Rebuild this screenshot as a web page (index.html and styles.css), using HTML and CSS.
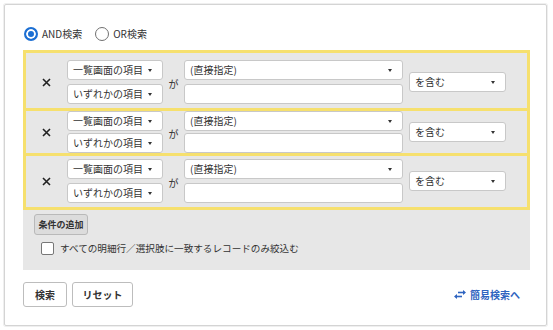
FILE: index.html
```html
<!DOCTYPE html>
<html lang="ja">
<head>
    <meta charset="UTF-8">
    <meta name="viewport" content="width=device-width, initial-scale=1.0">
    <title>詳細検索</title>
    <link rel="stylesheet" href="styles.css">
</head>
<body>

<div class="search-panel">
    <!-- AND / OR -->
    <div class="mode">
        <label class="radio checked"><span class="radio-mark"></span>AND検索</label>
        <label class="radio"><span class="radio-mark"></span>OR検索</label>
    </div>

    <div class="conditions">
        <div class="cond-row first">
            <div class="cond-del">
                <svg width="9" height="9" viewBox="0 0 9 9"><path d="M1 1L8 8M8 1L1 8" stroke="#222" stroke-width="1.6"/></svg>
            </div>
            <div class="cond-fields">
                <div class="select">一覧画面の項目</div>
                <div class="select">いずれかの項目</div>
            </div>
            <div class="cond-ga">が</div>
            <div class="cond-fields wide">
                <div class="select">(直接指定)</div>
                <div class="input"></div>
            </div>
            <div class="cond-op"><div class="select">を含む</div></div>
        </div>

        <div class="cond-row second">
            <div class="cond-del">
                <svg width="9" height="9" viewBox="0 0 9 9"><path d="M1 1L8 8M8 1L1 8" stroke="#222" stroke-width="1.6"/></svg>
            </div>
            <div class="cond-fields">
                <div class="select">一覧画面の項目</div>
                <div class="select">いずれかの項目</div>
            </div>
            <div class="cond-ga">が</div>
            <div class="cond-fields wide">
                <div class="select">(直接指定)</div>
                <div class="input"></div>
            </div>
            <div class="cond-op"><div class="select">を含む</div></div>
        </div>

        <div class="cond-row third">
            <div class="cond-del">
                <svg width="9" height="9" viewBox="0 0 9 9"><path d="M1 1L8 8M8 1L1 8" stroke="#222" stroke-width="1.6"/></svg>
            </div>
            <div class="cond-fields">
                <div class="select">一覧画面の項目</div>
                <div class="select">いずれかの項目</div>
            </div>
            <div class="cond-ga">が</div>
            <div class="cond-fields wide">
                <div class="select">(直接指定)</div>
                <div class="input"></div>
            </div>
            <div class="cond-op"><div class="select">を含む</div></div>
        </div>

        <button class="btn-add">条件の追加</button>

        <label class="check"><span class="check-box"></span>すべての明細行／選択肢に一致するレコードのみ絞込む</label>
    </div>

    <div class="actions">
        <div class="buttons">
            <button class="btn btn-search">検索</button>
            <button class="btn btn-reset">リセット</button>
        </div>
        <a class="switch-link" href="#">
            <svg width="14" height="11" viewBox="0 0 14 11">
                <path d="M5 3.5H11.5" stroke="#2f64c0" stroke-width="1.6"/>
                <path d="M10 1L13 3.5L10 6Z" fill="#2f64c0"/>
                <path d="M9 7.5H2.5" stroke="#2f64c0" stroke-width="1.6"/>
                <path d="M4 5L1 7.5L4 10Z" fill="#2f64c0"/>
            </svg>
            簡易検索へ
        </a>
    </div>
</div>

</body>
</html>
```

FILE: styles.css
```css
body {
    margin: 0;
    background-color: #fff;
    font-family: "Noto Sans CJK JP", "Noto Sans", sans-serif;
    font-size: 10px;
    color: #333;
}

.search-panel {
    box-sizing: border-box;
    width: 543px;
    height: 322px;
    margin: 4px;
    padding: 22px 17px 0 18px;
    border: 1px solid #d4d4d4;
    border-radius: 2px;
    box-shadow: 0 0 0 1px #efefef;
}

/* AND / OR */
.mode {
    display: flex;
    gap: 13px;
    height: 14px;
    margin-bottom: 9px;
    margin-left: 1px;
}

.radio {
    display: flex;
    align-items: center;
    gap: 4px;
    line-height: 14px;
}

.radio-mark {
    box-sizing: border-box;
    width: 14px;
    height: 14px;
    border: 1.5px solid #707070;
    border-radius: 50%;
    background: #fff;
}

.radio.checked .radio-mark {
    border: 2px solid #1c6fd3;
    background: #1c6fd3;
    box-shadow: inset 0 0 0 2px #fff;
}

/* conditions */
.conditions {
    width: 507px;
    padding-bottom: 15px;
    background-color: #e7e7e7;
}

.cond-row {
    display: flex;
    align-items: center;
    border: 3px solid #f6e06e;
    border-top: none;
}

.cond-row.first {
    border-top: 3px solid #f6e06e;
    padding: 7px 0 4px;
}

.cond-row.second {
    padding: 0;
}

.cond-row.second .cond-fields {
    gap: 2px;
}

.cond-row.third {
    padding: 3px 0 4px;
}

.cond-del {
    width: 41px;
    display: flex;
    justify-content: center;
}

.cond-fields {
    display: flex;
    flex-direction: column;
    gap: 4px;
    width: 96px;
}

.cond-fields.wide {
    width: 219px;
}

.cond-ga {
    width: 21px;
    text-align: center;
    padding-top: 3px;
}

.cond-op {
    width: 97px;
    margin-left: 6px;
}

.select,
.input {
    box-sizing: border-box;
    height: 20px;
    background: #fff;
    border: 1px solid #c8c8c8;
    border-radius: 3px;
}

.select {
    display: flex;
    align-items: center;
    justify-content: space-between;
    padding: 0 10px 0 5px;
    line-height: 18px;
    white-space: nowrap;
}

.select::after {
    content: "";
    border-left: 2.5px solid transparent;
    border-right: 2.5px solid transparent;
    border-top: 3px solid #333;
    margin-top: 1px;
}

.btn-add {
    display: block;
    box-sizing: border-box;
    width: 54px;
    height: 21px;
    margin: 4px 0 0 11px;
    padding: 0;
    font-family: inherit;
    font-size: 9px;
    font-weight: bold;
    color: #333;
    background: #dcdcdc;
    border: 1px solid #b9b9b9;
    border-radius: 3px;
}

.check {
    display: flex;
    align-items: center;
    gap: 6px;
    margin: 7px 0 0 18px;
    font-size: 9.6px;
    line-height: 13px;
}

.check-box {
    box-sizing: border-box;
    width: 13px;
    height: 13px;
    background: #fff;
    border: 1px solid #777;
    border-radius: 2px;
}

/* bottom actions */
.actions {
    display: flex;
    justify-content: space-between;
    align-items: center;
    width: 497px;
    margin-top: 12px;
}

.buttons {
    display: flex;
    gap: 5px;
}

.btn {
    box-sizing: border-box;
    height: 25px;
    padding: 0;
    font-family: inherit;
    font-size: 10px;
    font-weight: bold;
    color: #333;
    background: #fff;
    border: 1px solid #bdbdbd;
    border-radius: 3px;
}

.btn-search {
    width: 44px;
}

.btn-reset {
    width: 61px;
}

.switch-link {
    display: flex;
    align-items: center;
    gap: 3px;
    color: #2f64c0;
    font-weight: bold;
    text-decoration: none;
}
```
